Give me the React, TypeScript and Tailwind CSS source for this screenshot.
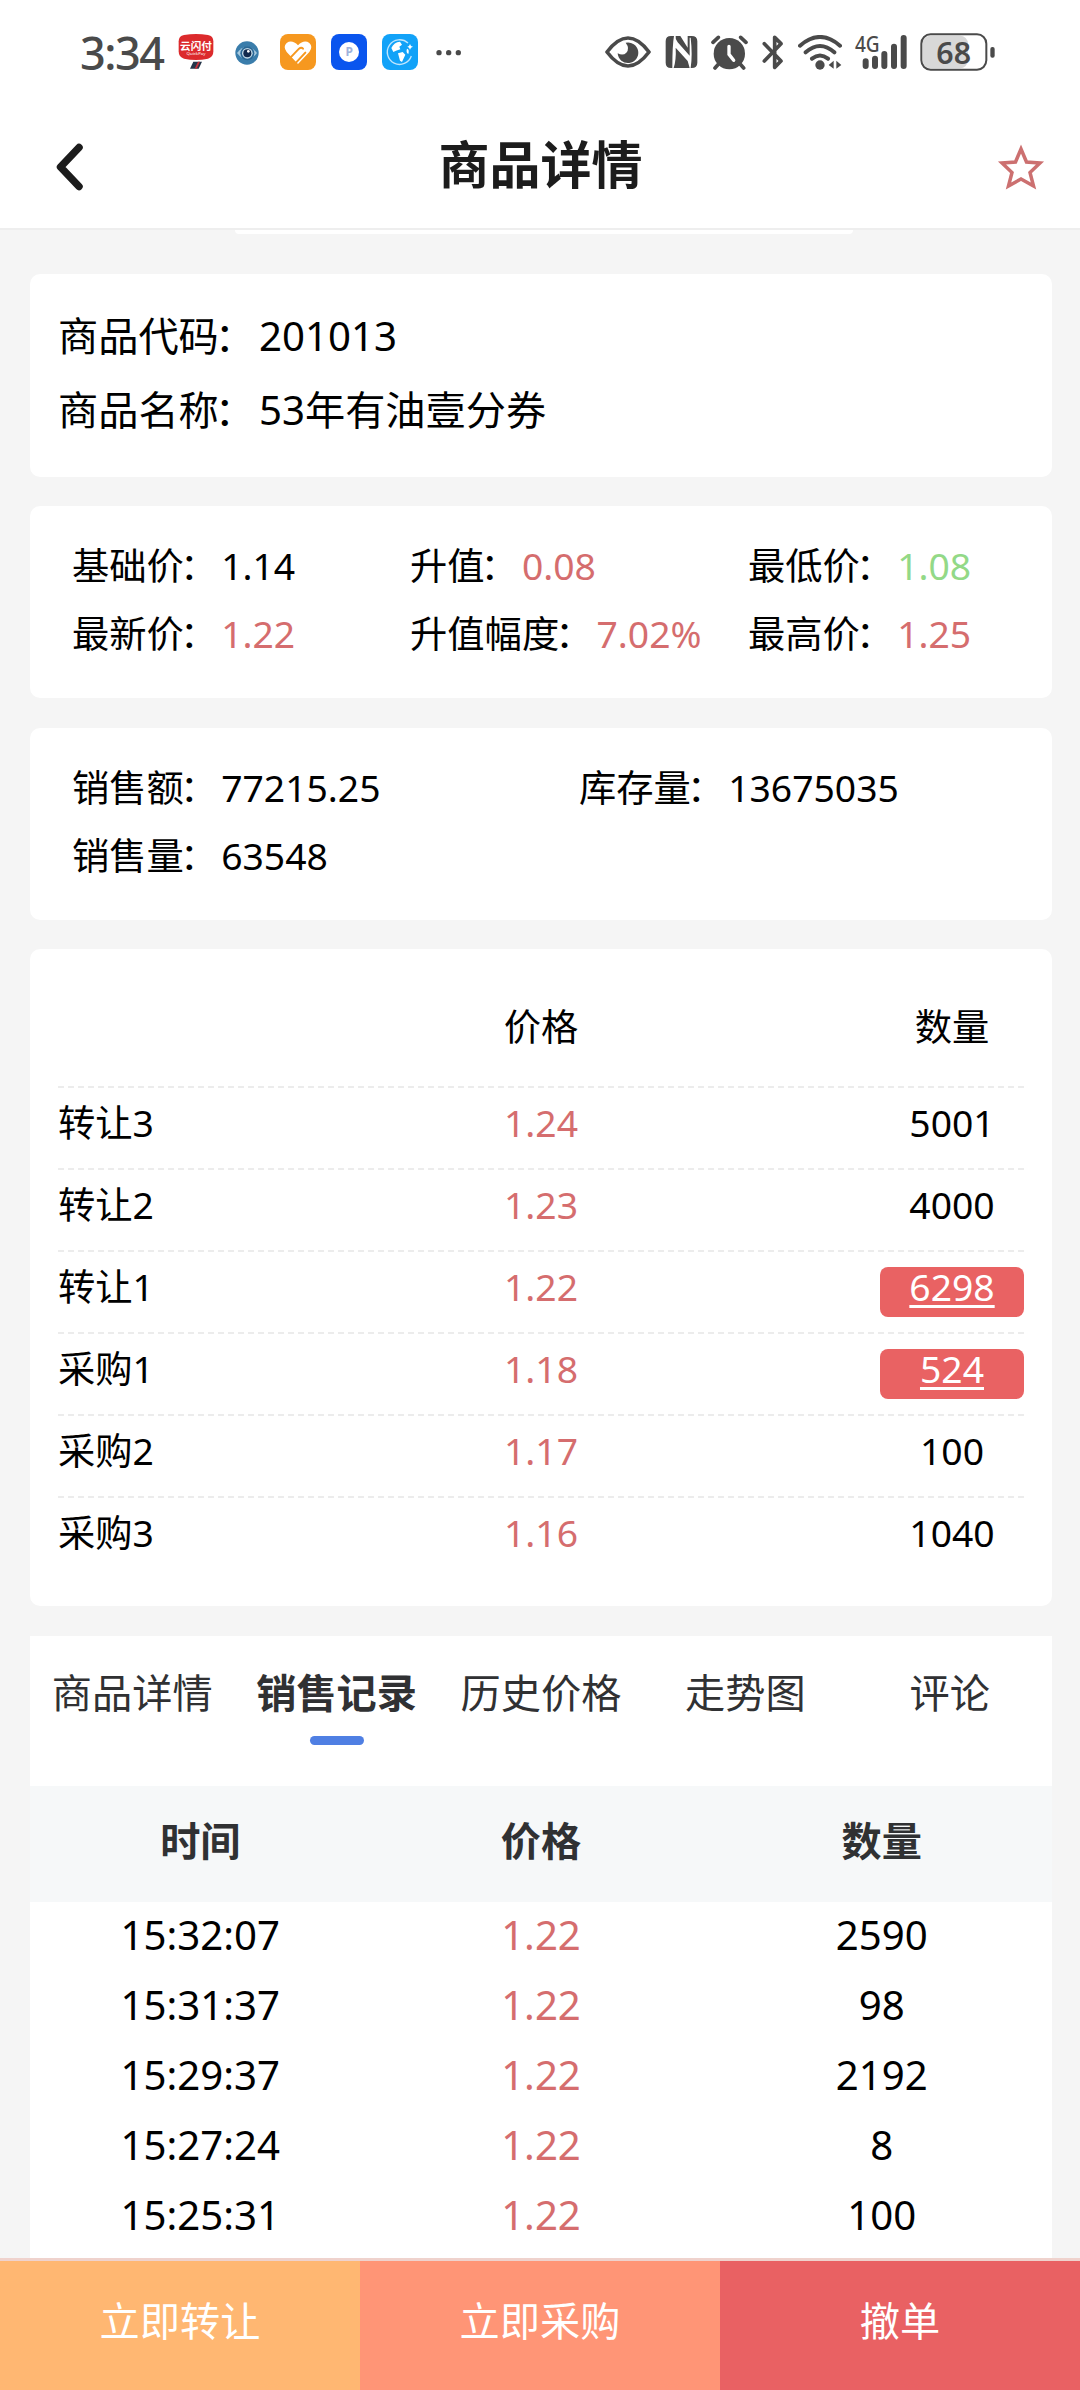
import { ReactNode } from "react";

const TEXT_FONT = "font-['Noto_Sans','Noto_Sans_CJK_SC',sans-serif]";

const quotes = [
  { label: "基础价", value: "1.14", color: "text-black" },
  { label: "升值", value: "0.08", color: "text-[#d56d6e]" },
  { label: "最低价", value: "1.08", color: "text-[#93d987]" },
  { label: "最新价", value: "1.22", color: "text-[#d56d6e]" },
  { label: "升值幅度", value: "7.02%", color: "text-[#d56d6e]" },
  { label: "最高价", value: "1.25", color: "text-[#d56d6e]" },
];

const sales = [
  { label: "销售额", value: "77215.25" },
  { label: "库存量", value: "13675035" },
  { label: "销售量", value: "63548" },
];

const orders = [
  { label: "转让3", price: "1.24", amount: "5001", active: false },
  { label: "转让2", price: "1.23", amount: "4000", active: false },
  { label: "转让1", price: "1.22", amount: "6298", active: true },
  { label: "采购1", price: "1.18", amount: "524", active: true },
  { label: "采购2", price: "1.17", amount: "100", active: false },
  { label: "采购3", price: "1.16", amount: "1040", active: false },
];

const tabs = ["商品详情", "销售记录", "历史价格", "走势图", "评论"];

const records = [
  { time: "15:32:07", price: "1.22", amount: "2590" },
  { time: "15:31:37", price: "1.22", amount: "98" },
  { time: "15:29:37", price: "1.22", amount: "2192" },
  { time: "15:27:24", price: "1.22", amount: "8" },
  { time: "15:25:31", price: "1.22", amount: "100" },
];

const Card = ({ className, children }: { className: string; children: ReactNode }) => (
  <section className={`ml-[30px] mr-[28px] rounded-[10px] bg-white ${className}`}>{children}</section>
);

const Field = ({ label, value, color = "text-black" }: { label: string; value: string; color?: string }) => (
  <p className="whitespace-nowrap">
    {label}
    <span className="-ml-[4px] mr-[4px]">：</span>
    <span className={color}>{value}</span>
  </p>
);

const StatusBar = () => (
  <div className="flex h-[105px] items-start pl-[80px] pr-[84px] pt-[34px] text-[#4a4a4a]">
    <div className="w-[98px] text-[45px] font-medium leading-[38px] tracking-[-1.5px]">3:34</div>

    {/* App notifications */}
    <svg className="h-[36px] w-[36px] overflow-visible" viewBox="0 0 108 108">
      <path d="M18 3 Q54 -3 90 3 Q106 6 106 22 V52 Q106 70 90 74 Q54 82 18 74 Q2 70 2 52 V22 Q2 6 18 3Z" fill="#dc2a2c" />
      <path d="M46 83 H72 L62 104 H36Z" fill="#26364a" />
      <path d="M60 83 H66 L56 104 H50Z" fill="#c8313a" />
      <text x="54" y="47" fontSize="32" fontWeight="700" fill="#fff" textAnchor="middle">云闪付</text>
      <text x="54" y="64" fontSize="13" fill="#fff" textAnchor="middle">QuickPay</text>
    </svg>
    <svg className="ml-[21px] mt-[7px] h-[24px] w-[24px]" viewBox="0 0 72 72">
      <circle cx="36" cy="36" r="35" fill="#3a7dab" />
      <path d="M6 36 Q36 -2 66 36 Q36 74 6 36Z" fill="#a9cbe0" />
      <circle cx="37" cy="37" r="21" fill="#2a6795" />
      <circle cx="37" cy="37" r="16" fill="#c3dbe9" />
      <circle cx="37" cy="37" r="12" fill="#122a4e" />
      <circle cx="40" cy="31" r="4" fill="#fff" />
    </svg>
    <svg className="ml-[21px] h-[36px] w-[36px]" viewBox="0 0 108 108">
      <rect width="108" height="108" rx="24" fill="#f6981f" />
      <path d="M54 90 L20 54 Q8 38 20 27 Q36 16 54 34 Q72 16 88 27 Q100 38 88 54Z" fill="#fff" />
      <path d="M32 70 L57 44 Q64 38 69 44 M48 86 L76 56" fill="none" stroke="#f6981f" strokeWidth="6" strokeLinecap="round" />
    </svg>
    <svg className="ml-[15px] h-[36px] w-[36px]" viewBox="0 0 108 108">
      <rect width="108" height="108" rx="24" fill="#0a55ee" />
      <circle cx="54" cy="54" r="30" fill="#fff" />
      <text x="55" y="67" fontSize="36" fontWeight="700" fill="#9fb2dc" textAnchor="middle">P</text>
    </svg>
    <svg className="ml-[15px] h-[36px] w-[36px]" viewBox="0 0 108 108">
      <rect width="108" height="108" rx="24" fill="#12a2f8" />
      <path d="M78 27 A37 37 0 1 0 88 66" fill="none" stroke="#bfe5fd" strokeWidth="4" />
      <path d="M28 42 Q36 24 54 23 L60 32 L52 38 L55 46 L42 50 L34 54Z M48 58 L62 54 L70 62 L60 84 L54 80Z M75 44 q8 2 4 16 q-8 -4 -4 -16Z M84 30 l3 6 6 2 -6 3 -3 6 -3 -6 -5 -3 5 -2Z" fill="#fff" />
    </svg>
    <svg className="ml-[17px] mt-[15px] h-[7px] w-[28px]" viewBox="0 0 84 21">
      <g fill="#4a4a4a">
        <circle cx="12" cy="11" r="8" />
        <circle cx="41" cy="11" r="8" />
        <circle cx="70" cy="11" r="8" />
      </g>
    </svg>

    {/* System indicators */}
    <div className="ml-auto flex items-start">
      <svg className="mt-[2px] h-[32px] w-[46px]" viewBox="0 0 138 96">
        <path d="M6 48 Q69 -36 132 48 Q69 132 6 48Z" fill="none" stroke="#4a4a4a" strokeWidth="11" strokeLinejoin="round" />
        <path d="M62 20 A31 31 0 1 1 38 52 Q54 60 64 50 Q75 37 62 20Z" fill="#4a4a4a" />
      </svg>
      <svg className="ml-[14px] mt-[1px] h-[34px] w-[33px]" viewBox="0 0 99 102">
        <path d="M18 3 H27 Q22 30 22 99 H18 Q2 99 2 83 V19 Q2 3 18 3Z M32 3 H46 L68 38 V3 H80 Q97 3 97 19 V83 Q97 99 80 99 H77 Q83 60 77 8 H74 V62 L38 22 Q30 12 32 3Z M32 38 L68 78 L74 99 H26 Q34 74 32 38Z" fill="#4a4a4a" />
      </svg>
      <svg className="ml-[13px] mt-[1px] h-[35px] w-[37px]" viewBox="0 0 111 105">
        <circle cx="55" cy="56" r="47" fill="#4a4a4a" />
        <path d="M6 22 L22 7 M105 22 L89 7 M22 88 L12 99 M88 88 L98 99" stroke="#4a4a4a" strokeWidth="11" strokeLinecap="round" />
        <path d="M54 34 V58 L68 76" fill="none" stroke="#fff" strokeWidth="10" strokeLinecap="round" />
      </svg>
      <svg className="ml-[14px] mt-[1px] h-[35px] w-[22px]" viewBox="0 0 66 105">
        <path d="M7 26 L57 78 L38 97 V7 L57 26 L7 78" fill="none" stroke="#4a4a4a" strokeWidth="11" strokeLinecap="round" strokeLinejoin="round" />
      </svg>
      <svg className="ml-[14px] mt-[1px] h-[35px] w-[44px]" viewBox="0 0 132 105">
        <path d="M6 32 Q66 -20 126 32 M23 52 Q66 14 109 52 M42 71 Q66 52 90 71" fill="none" stroke="#4a4a4a" strokeWidth="12" strokeLinecap="round" />
        <circle cx="66" cy="90" r="14" fill="#4a4a4a" />
        <path d="M107 77 V101 L92 90Z M115 77 V101 L130 90Z" fill="#4a4a4a" />
      </svg>
      <svg className="ml-[13px] h-[36px] w-[52px] overflow-visible" viewBox="0 0 156 108">
        <path d="M32 82 V96 M60 74 V96 M88 60 V96 M117 38 V96 M146 12 V96" stroke="#4a4a4a" strokeWidth="18" strokeLinecap="round" />
        <path d="M0 0 H74 V58 H0Z" fill="#fff" />
        <text x="0" y="53" fontSize="66" fontWeight="500" fill="#4a4a4a" textLength="74" lengthAdjust="spacingAndGlyphs">4G</text>
      </svg>
      <svg className="ml-[13px] mt-[-1px] h-[38px] w-[76px] overflow-visible" viewBox="0 0 228 114">
        <rect x="8" y="8" width="136" height="98" rx="24" fill="#d8d8d8" />
        <rect x="4" y="4" width="195" height="106" rx="28" fill="none" stroke="#4a4a4a" strokeWidth="6" />
        <rect x="211" y="42" width="13" height="32" rx="6" fill="#4a4a4a" />
        <text x="101" y="92" fontSize="94" fontWeight="600" fill="#4a4a4a" textAnchor="middle" textLength="104" lengthAdjust="spacingAndGlyphs">68</text>
      </svg>
    </div>
  </div>
);

const Header = () => (
  <header className="flex h-[125px] items-center justify-between border-b-2 border-[#eeeeee] pl-[54px] pr-[35px]">
    <svg className="h-[48px] w-[30px]" viewBox="0 0 30 48">
      <path d="M25 4.500 L6.500 24 L25 43.500" fill="none" stroke="#1c1c1c" strokeWidth="7.500" strokeLinecap="round" strokeLinejoin="round" />
    </svg>
    <h1 className="pb-[6px] text-[51px] font-bold leading-[72px] text-[#1c1c1c]">商品详情</h1>
    <svg className="h-[46px] w-[48px]" viewBox="0 0 48 46">
      <path d="M24 5 L29.500 18 L43 19 L33 28.500 L36.500 42 L24 35 L11.500 42 L15 28.500 L5 19 L18.500 18Z" fill="none" stroke="#cc7070" strokeWidth="3.500" />
    </svg>
  </header>
);

const App = () => {
  return (
    <div lang="zh-CN" className={`flex h-[2390px] w-[1080px] flex-col overflow-hidden bg-[#f5f5f5] text-black ${TEXT_FONT}`}>
      <div className="bg-white">
        <StatusBar />
        <Header />
      </div>

      <main className="flex flex-1 flex-col overflow-hidden">
        {/* Bottom edge of the scrolled-off banner */}
        <div className="ml-[235px] h-[4px] w-[618px] shrink-0 rounded-b-md bg-white" />

        <Card className="mt-[40px] h-[203px] shrink-0 px-[28px] pt-[25px] text-[40.2px] leading-[73.500px]">
          <Field label="商品代码" value="201013" />
          <Field label="商品名称" value="53年有油壹分券" />
        </Card>

        <Card className="mt-[29px] grid h-[192px] shrink-0 grid-cols-[338px_338px_1fr] content-start pl-[42px] pt-[26px] text-[37.300px] leading-[68px]">
          {quotes.map((item) => (
            <Field key={item.label} {...item} />
          ))}
        </Card>

        <Card className="mt-[30px] grid h-[192px] shrink-0 grid-cols-[507px_1fr] content-start pl-[42px] pt-[26px] text-[37.300px] leading-[68px]">
          {sales.map((item) => (
            <Field key={item.label} {...item} />
          ))}
        </Card>

        {/* Order book */}
        <Card className="mt-[29px] h-[657px] shrink-0 px-[28px] text-[37.300px]">
          <div className="flex h-[139px] items-center justify-between border-b-2 border-dashed border-[#ececec] pt-[18px]">
            <span className="w-[144px]" />
            <span>价格</span>
            <span className="w-[144px] text-center">数量</span>
          </div>
          {orders.map((item) => (
            <div
              key={item.label}
              className="flex h-[82px] items-start justify-between border-b-2 border-dashed border-[#ececec] pt-[15px] leading-[39px] last:border-0"
            >
              <span className="w-[144px]">{item.label}</span>
              <span className="text-[#d56d6e]">{item.price}</span>
              {item.active ? (
                <span className="h-[50px] w-[144px] rounded-lg bg-[#e96263] text-center text-white underline decoration-[3px] underline-offset-[4px]">
                  {item.amount}
                </span>
              ) : (
                <span className="w-[144px] text-center">{item.amount}</span>
              )}
            </div>
          ))}
        </Card>

        {/* Sales records */}
        <section className="ml-[30px] mr-[28px] mt-[30px] flex-1 bg-white text-[40.200px]">
          <nav className="grid h-[150px] grid-cols-5 pt-[28px] text-center text-[#303133]">
            {tabs.map((tab) => (
              <div key={tab} className="flex flex-col items-center">
                <span className={tab === "销售记录" ? "font-bold leading-[58px]" : "leading-[58px]"}>{tab}</span>
                {tab === "销售记录" && <i className="mt-[14px] h-[9px] w-[54px] rounded-full bg-[#4f7fe3]" />}
              </div>
            ))}
          </nav>
          <div className="grid h-[116px] grid-cols-3 items-center bg-[#f6f8f9] pb-[6px] text-center font-bold text-[#303133]">
            <span>时间</span>
            <span>价格</span>
            <span>数量</span>
          </div>
          {records.map((item) => (
            <div key={item.time} className="grid h-[70px] grid-cols-3 text-center leading-[65px]">
              <span>{item.time}</span>
              <span className="text-[#d56d6e]">{item.price}</span>
              <span>{item.amount}</span>
            </div>
          ))}
        </section>
      </main>

      <footer className="grid h-[132px] shrink-0 grid-cols-3 border-t-[3px] border-[#efd2cd] text-center text-[40.200px] text-white">
        <button className="bg-[#ffb772] pb-[8px]">立即转让</button>
        <button className="bg-[#ff9576] pb-[8px]">立即采购</button>
        <button className="bg-[#e96163] pb-[8px]">撤单</button>
      </footer>
    </div>
  );
};

export default App;
